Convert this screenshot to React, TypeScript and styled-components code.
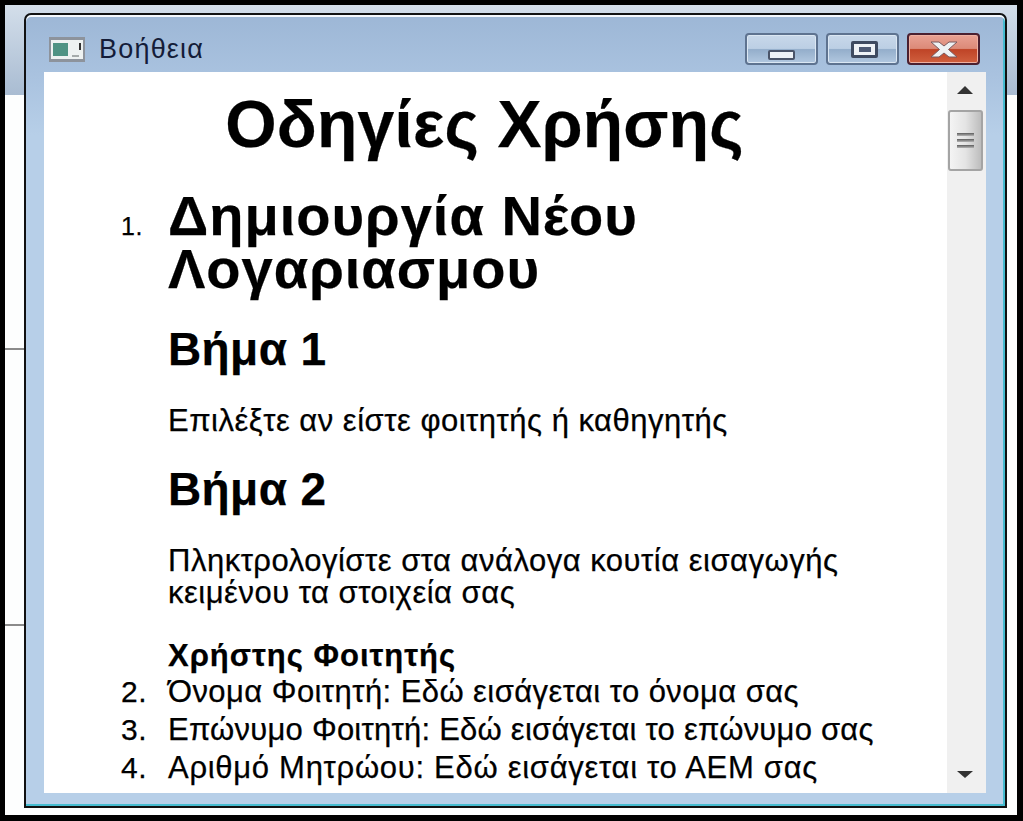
import React from "react";
import styled, {createGlobalStyle} from "styled-components";

const GlobalStyle = createGlobalStyle`
    html, body {
        margin: 0;
        padding: 0;
        background: #000;
    }
`;

const Screen = styled.div`
    box-sizing: border-box;
    width: 1023px;
    height: 821px;
    padding: 5px 6px 6px 5px;
    background: #000;
`;

/* the desktop behind the dialog: blue band on top, two rules on the left */
const Desktop = styled.div`
    box-sizing: border-box;
    height: 100%;
    padding: 8px 10px 7px 19px;
    background:
        linear-gradient(#8b8b8b, #8b8b8b) 0 343px / 19px 2px no-repeat,
        linear-gradient(#8b8b8b, #8b8b8b) 0 619px / 19px 2px no-repeat,
        linear-gradient(#d3deea, #a9bcd2) 0 0 / 100% 90px no-repeat,
        #fdfefe;
`;

const Window = styled.div`
    box-sizing: border-box;
    height: 100%;
    display: flex;
    flex-direction: column;
    border: 2px solid #111;
    border-radius: 7px 7px 0 0;
    box-shadow: inset 0 2px 0 #f4f8fc, inset -2px -2px 0 #45bcd0;
    padding: 2px 19px 13px 18px;
    background: linear-gradient(#9db7d6 0, #a9c2df 60px, #b7cfe8 120px);
`;

const TitleBar = styled.div`
    flex: none;
    box-sizing: border-box;
    height: 55px;
    padding: 9px 6px 0 5px;
    display: flex;
    align-items: center;
`;

const AppIcon = styled.svg`
    width: 36px;
    height: 25px;
`;

const Caption = styled.span`
    flex: 1;
    margin-left: 14px;
    margin-top: 1px;
    font-family: "Liberation Sans", sans-serif;
    font-size: 27px;
    letter-spacing: 1.2px;
    color: #141c38;
`;

const WindowButtons = styled.div`
    display: flex;
    gap: 8px;
`;

const WindowButton = styled.div<{$close?: boolean}>`
    box-sizing: border-box;
    width: 73px;
    height: 32px;
    display: flex;
    align-items: center;
    justify-content: center;
    border: 2px solid ${(p) => (p.$close ? "#4b2030" : "#5e7390")};
    border-radius: 4px;
    box-shadow: inset 0 0 0 1px ${(p) => (p.$close ? "#eeb0a2" : "#dbe7f3")};
    background: ${(p) =>
        p.$close
            ? "linear-gradient(#e9a294 0, #dc8a78 48%, #bf4427 52%, #d0603f 100%)"
            : "linear-gradient(#c8d8ea 0, #bccfe4 48%, #94aecb 52%, #b2c8e0 100%)"};
`;

const MinGlyph = styled.div`
    box-sizing: border-box;
    width: 27px;
    height: 10px;
    margin-top: 12px;
    border: 2px solid #4a5468;
    border-radius: 2px;
    background: #eef2f6;
`;

const MaxGlyph = styled.div`
    box-sizing: border-box;
    width: 27px;
    height: 17px;
    margin-left: 4px;
    border: 3px solid #3e4a60;
    border-radius: 2px;
    background: #eef2f6;
    display: flex;
    align-items: center;
    justify-content: center;

    &::after {
        content: "";
        width: 12px;
        height: 5px;
        background: #4d5a74;
    }
`;

const CloseGlyph = styled.svg`
    width: 28px;
    height: 17px;
`;

const Client = styled.div`
    flex: 1;
    min-height: 0;
    display: flex;
    background: #fff;
`;

const Page = styled.div`
    flex: 1;
    min-width: 0;
    overflow: hidden;
    color: #000;
    font-family: "Liberation Sans", sans-serif;
    font-size: 31px;
    line-height: 32px;
    letter-spacing: 0.5px;
    -webkit-text-stroke: 0.25px #000;
`;

const Heading = styled.h1`
    margin: 17px 22px 0 0;
    font-size: 66px;
    line-height: 70px;
    letter-spacing: 0.2px;
    font-weight: bold;
    text-align: center;
`;

const Steps = styled.ol`
    margin: 30px 0 0;
    padding: 0 60px 0 77px;
    list-style: none;
    counter-reset: step;
`;

const Step = styled.li<{$small?: boolean}>`
    margin-bottom: 6px;
    display: grid;
    grid-template-columns: 47px 1fr;
    align-items: first baseline;
    counter-increment: step;

    &::before {
        content: counter(step) ".";
        font-size: ${(p) => (p.$small ? "25px" : "30px")};
    }
`;

const StepBody = styled.div<{$tracking?: number}>`
    min-width: 0;
    ${(p) => (p.$tracking !== undefined ? `letter-spacing: ${p.$tracking}px;` : "")}
`;

const StepTitle = styled.h2`
    margin: 0 0 32px;
    font-size: 56px;
    line-height: 53px;
    letter-spacing: 1px;
    font-weight: bold;
`;

const SubTitle = styled.h3`
    margin: 30px 0 0;
    font-size: 46px;
    line-height: 44px;
    letter-spacing: 0.4px;
    font-weight: bold;
`;

const Text = styled.p`
    margin: 34px 0 0;
`;

const UserTitle = styled.h4`
    margin: 31px 0 -2px;
    font-size: 31px;
    line-height: 32px;
    letter-spacing: 1px;
    font-weight: bold;
`;

const ScrollBar = styled.div`
    flex: none;
    width: 39px;
    box-sizing: border-box;
    padding: 0 3px 0 1px;
    display: flex;
    flex-direction: column;
    background: #f0f0f0;
`;

const Arrow = styled.svg`
    flex: none;
    width: 35px;
    height: 36px;
`;

const Thumb = styled.div`
    flex: none;
    box-sizing: border-box;
    height: 61px;
    margin-top: 2px;
    display: flex;
    flex-direction: column;
    align-items: center;
    justify-content: center;
    gap: 3px;
    border: 2px solid #a4a4a4;
    border-radius: 3px;
    background: linear-gradient(90deg, #f4f4f4 0, #e4e4e4 50%, #bdbdbd 100%);
`;

const Grip = styled.div`
    width: 17px;
    height: 3px;
    background: linear-gradient(#5c5c5c, #b5b5b5);
`;

const Track = styled.div`
    flex: 1;
`;

export default function App() {
    return (
        <Screen>
            <GlobalStyle />
            <Desktop>
                <Window>
                    <TitleBar>
                        <AppIcon viewBox="0 0 36 25">
                            <rect x="0" y="0" width="36" height="25" fill="#8d939c" />
                            <rect x="2" y="3" width="32" height="19" fill="#eef2f2" />
                            <rect x="4" y="6" width="15" height="13" fill="#4f9384" />
                            <rect x="30" y="6" width="2" height="7" fill="#333" />
                            <rect x="23" y="18" width="7" height="2" fill="#a5abab" />
                        </AppIcon>
                        <Caption>Βοήθεια</Caption>
                        <WindowButtons>
                            <WindowButton>
                                <MinGlyph />
                            </WindowButton>
                            <WindowButton>
                                <MaxGlyph />
                            </WindowButton>
                            <WindowButton $close>
                                <CloseGlyph viewBox="0 0 28 17">
                                    <path
                                        d="M1 1 H9 L14 5 L19 1 H27 L18.5 8.5 L27 16 H19 L14 12 L9 16 H1 L9.5 8.5 Z"
                                        fill="#eef2f4"
                                        stroke="#7a5a5e"
                                        strokeWidth="1"
                                    />
                                </CloseGlyph>
                            </WindowButton>
                        </WindowButtons>
                    </TitleBar>
                    <Client>
                        <Page>
                            <Heading>Οδηγίες Χρήσης</Heading>
                            <Steps>
                                <Step $small>
                                    <StepBody>
                                        <StepTitle>Δημιουργία Νέου Λογαριασμου</StepTitle>
                                        <SubTitle>Βήμα 1</SubTitle>
                                        <Text>Επιλέξτε αν είστε φοιτητής ή καθηγητής</Text>
                                        <SubTitle>Βήμα 2</SubTitle>
                                        <Text>Πληκτρολογίστε στα ανάλογα κουτία εισαγωγής κειμένου τα στοιχεία σας</Text>
                                        <UserTitle>Χρήστης Φοιτητής</UserTitle>
                                    </StepBody>
                                </Step>
                                <Step>
                                    <StepBody $tracking={0.43}>Όνομα Φοιτητή: Εδώ εισάγεται το όνομα σας</StepBody>
                                </Step>
                                <Step>
                                    <StepBody $tracking={0.24}>Επώνυμο Φοιτητή: Εδώ εισάγεται το επώνυμο σας</StepBody>
                                </Step>
                                <Step>
                                    <StepBody $tracking={0.71}>Αριθμό Μητρώου: Εδώ εισάγεται το ΑΕΜ σας</StepBody>
                                </Step>
                            </Steps>
                        </Page>
                        <ScrollBar>
                            <Arrow viewBox="0 0 35 36">
                                <path d="M9 22 L17 14 L25 22 Z" fill="#333" />
                            </Arrow>
                            <Thumb>
                                <Grip />
                                <Grip />
                                <Grip />
                            </Thumb>
                            <Track />
                            <Arrow viewBox="0 0 35 36">
                                <path d="M9 14 L25 14 L17 21 Z" fill="#333" />
                            </Arrow>
                        </ScrollBar>
                    </Client>
                </Window>
            </Desktop>
        </Screen>
    );
}
